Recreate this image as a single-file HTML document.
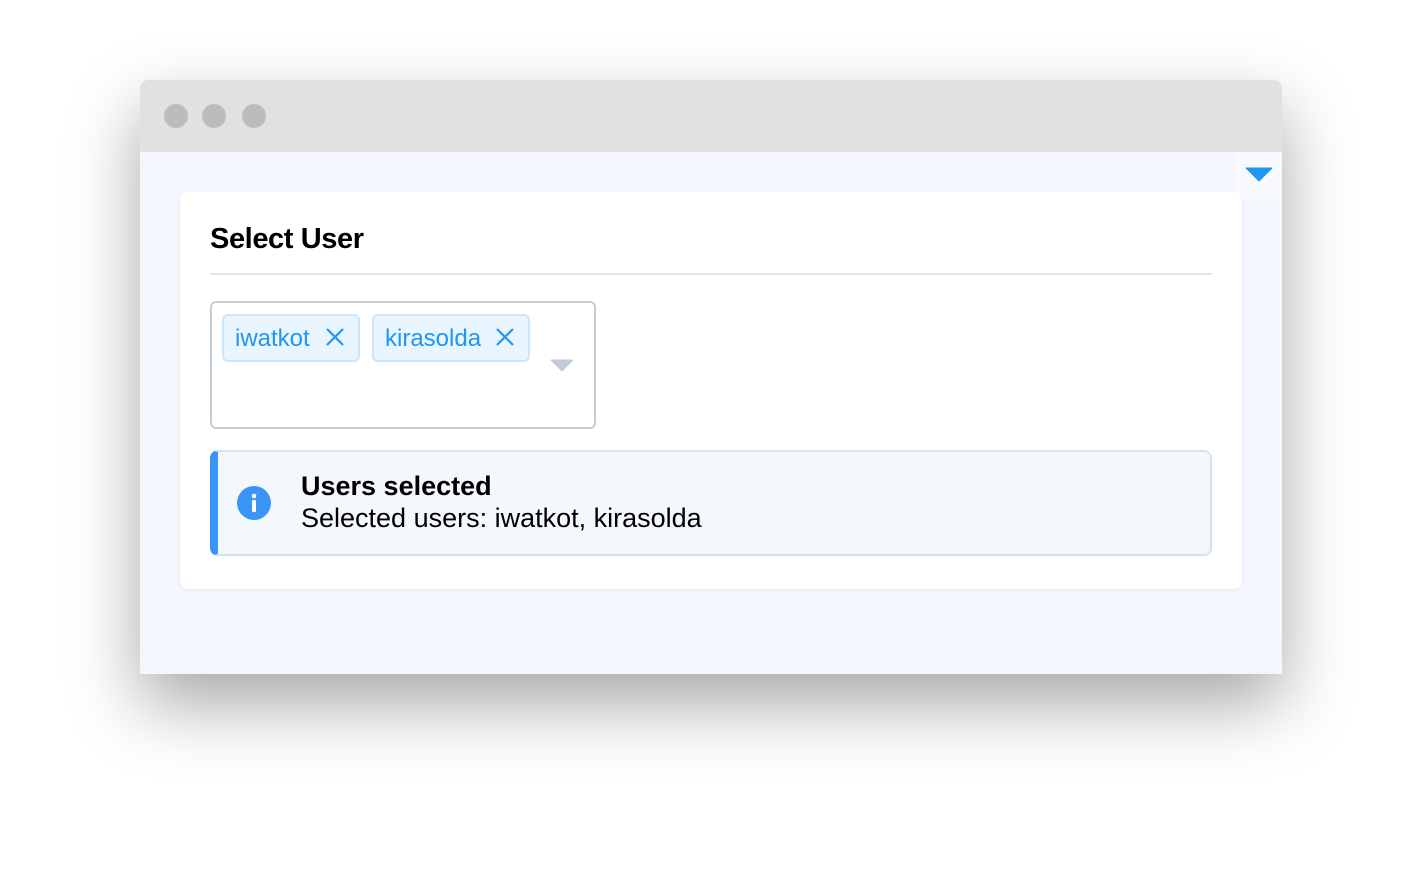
<!DOCTYPE html>
<html><head><meta charset="utf-8"><style>
*{box-sizing:border-box;margin:0;padding:0}
html,body{width:1422px;height:874px;background:#fff;overflow:hidden;font-family:"Liberation Sans",Arial,sans-serif}
.win{position:absolute;left:140px;top:80px;width:1142px;height:594px;border-radius:8px 8px 0 0;overflow:hidden;box-shadow:0 30px 70px rgba(0,0,0,0.35)}
.bar{height:72px;background:#e1e1e1;position:relative}
.dot{position:absolute;top:24px;width:24px;height:24px;border-radius:50%;background:#bcbcbc}
.body{position:absolute;top:72px;left:0;right:0;bottom:0;background:#f3f6fd}
.tgl{position:absolute;right:0;top:0;width:48px;height:48px;background:#f7f9fe;border-radius:0 0 0 10px}
.card{position:absolute;left:40px;top:40px;width:1062px;height:397px;background:#fff;border-radius:8px;box-shadow:0 1px 3px rgba(0,0,0,0.05)}
h2{position:absolute;left:30px;top:31px;font-size:29px;font-weight:bold;color:#000;letter-spacing:-0.4px}
.hr{position:absolute;left:30px;right:30px;top:81px;height:2px;background:#e2e5ea}
.sel{position:absolute;left:30px;top:109px;width:386px;height:128px;border:2px solid #c6ced8;border-radius:6px}
.tag{position:absolute;top:11px;height:48px;background:#e8f4fe;border:2px solid #cde5fb;border-radius:6px;color:#2196f3;font-size:24px;line-height:46px;padding-left:11px}
.alert{position:absolute;left:30px;top:258px;width:1002px;height:106px;background:#f4f7fb;border:2px solid #d3e3f3;border-left:8px solid #3b95f7;border-radius:8px}
.t1{position:absolute;left:83px;top:19px;font-size:27px;font-weight:bold;color:#000}
.t2{position:absolute;left:83px;top:51px;font-size:27px;color:#000}
</style></head><body>
<div class="win">
 <div class="bar"><div class="dot" style="left:24px"></div><div class="dot" style="left:62px"></div><div class="dot" style="left:102px"></div></div>
 <div class="body">
  <div class="tgl"><svg style="position:absolute;left:11px;top:15px" width="28" height="16"><path d="M1 1H27L14 14Z" fill="#2196f3" stroke="#2196f3" stroke-linejoin="round"/></svg></div>
  <div class="card">
   <h2>Select User</h2>
   <div class="hr"></div>
   <div class="sel">
    <div class="tag" style="left:10px;width:138px">iwatkot<svg style="position:absolute;left:101px;top:11px" width="20" height="20"><path d="M2 2L18 18M18 2L2 18" stroke="#2196f3" stroke-width="2.2"/></svg></div>
    <div class="tag" style="left:160px;width:158px">kirasolda<svg style="position:absolute;left:121px;top:11px" width="20" height="20"><path d="M2 2L18 18M18 2L2 18" stroke="#2196f3" stroke-width="2.2"/></svg></div>
    <svg style="position:absolute;left:338px;top:56px" width="24" height="14"><path d="M1 1H23L12 12Z" fill="#c2ccd6" stroke="#c2ccd6" stroke-linejoin="round"/></svg>
   </div>
   <div class="alert">
    <svg style="position:absolute;left:19px;top:34px" width="34" height="34"><circle cx="17" cy="17" r="17" fill="#3b95f7"/><circle cx="17" cy="10" r="2.3" fill="#fff"/><rect x="15" y="14" width="4" height="12" rx="1" fill="#fff"/></svg>
    <div class="t1">Users selected</div>
    <div class="t2">Selected users: iwatkot, kirasolda</div>
   </div>
  </div>
 </div>
</div>
</body></html>
